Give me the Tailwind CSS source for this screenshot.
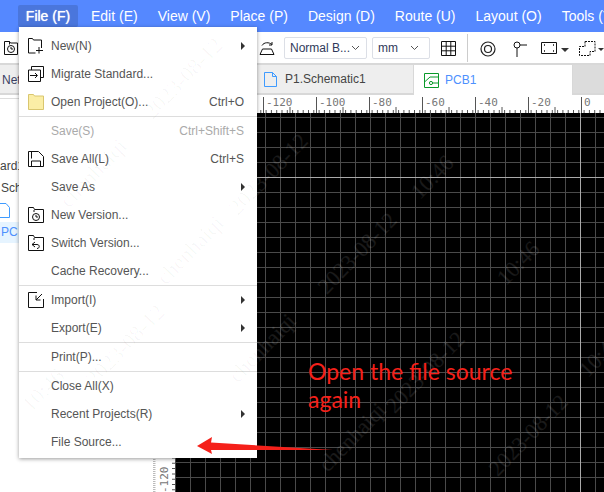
<!DOCTYPE html>
<html lang="en">
<head>
  <meta charset="UTF-8">
  <title>File menu</title>
  <script src="https://cdn.jsdelivr.net/npm/@tailwindcss/browser@4"></script>
</head>
<body class="w-[604px] h-[492px] overflow-hidden bg-white font-['Liberation_Sans',Arial,sans-serif] text-[12px] text-[#555]">
  <div class="relative w-[604px] h-[492px] overflow-hidden flex flex-col">
    <!-- menu bar -->
    <div class="h-[32px] shrink-0 bg-[#5588ff] text-white text-[14px] flex items-center pl-[18px] whitespace-nowrap overflow-hidden">
      <div class="h-[22px] w-[60px] shrink-0 flex items-center justify-center rounded-[2px] bg-[#4a76dc] [text-shadow:0_0_1px_#fff]">File (F)</div>
      <div class="ml-[13px] shrink-0">Edit (E)</div>
      <div class="ml-[20px] shrink-0">View (V)</div>
      <div class="ml-[20px] shrink-0">Place (P)</div>
      <div class="ml-[20px] shrink-0">Design (D)</div>
      <div class="ml-[20px] shrink-0">Route (U)</div>
      <div class="ml-[20px] shrink-0">Layout (O)</div>
      <div class="ml-[20px] shrink-0">Tools (T)</div>
    </div>

    <!-- toolbar -->
    <div class="h-[33px] shrink-0 border-b-2 border-[#d8d8d8] flex items-center relative">
      <svg class="absolute left-[3px] top-[8px]" width="16" height="16" viewBox="0 0 16 16" fill="none" stroke="#111"><path d="M1.500 14.500v-13h5l1 1.500h7v11.500zM6.500 1.500v3"/><circle cx="8" cy="9" r="3.500"/><path d="M8 7v2h2"/></svg>
      <svg class="absolute left-[259px] top-[9px]" width="16" height="15" viewBox="0 0 16 15" fill="none" stroke="#111"><path d="M1 13.500h14l-2.500-5.500h-9zM3 4.500C5 1 10 1 13 3.500M13 1v3h-3"/></svg>
      <div class="absolute left-[284px] top-[5px] w-[83px] h-[22px] border border-[#dcdfe6] rounded-[2px] flex items-center pl-[5px] text-[#303a5a] whitespace-nowrap">Normal B...<svg class="ml-[1px]" width="9" height="6" viewBox="0 0 9 6" fill="none" stroke="#555"><path d="M1 1l3.500 3.500L8 1"/></svg></div>
      <div class="absolute left-[372px] top-[5px] w-[58px] h-[22px] border border-[#dcdfe6] rounded-[2px] flex items-center justify-between px-[5px] text-[#303a5a]">mm<svg class="mr-[5px]" width="9" height="6" viewBox="0 0 9 6" fill="none" stroke="#555"><path d="M1 1l3.500 3.500L8 1"/></svg></div>
      <svg class="absolute left-[441px] top-[9px]" width="15" height="15" viewBox="0 0 15 15" fill="none" stroke="#111"><path d="M.5.500h14v14H.5zM5.200.500v14M9.800.500v14M.5 5.200h14M.5 9.800h14"/></svg>
      <div class="absolute left-[467px] top-[2px] w-px h-[28px] bg-[#ccc]"></div>
      <svg class="absolute left-[480px] top-[9px]" width="16" height="16" viewBox="0 0 16 16" fill="none" stroke="#222" stroke-width="1.200"><circle cx="8" cy="8" r="7"/><circle cx="8" cy="8" r="3.500"/></svg>
      <svg class="absolute left-[512px] top-[9px]" width="16" height="16" viewBox="0 0 16 16" fill="none" stroke="#111"><circle cx="5" cy="4" r="3"/><path d="M5 7v9M8 4h7"/></svg>
      <svg class="absolute left-[541px] top-[10px]" width="28" height="14" viewBox="0 0 28 14" fill="none" stroke="#111"><path d="M.5 .5h15v11H.5z"/><path d="M3 3h1M12 3h1M3 9h1M12 9h1" stroke-width="1.500"/><path d="M20 6h8l-4 4z" fill="#333" stroke="none"/></svg>
      <svg class="absolute left-[579px] top-[9px]" width="25" height="16" viewBox="0 0 25 16" fill="none" stroke="#111" stroke-dasharray="2 1"><path d="M6 .5h10v10h-5v4H.5v-9H6z"/><path d="M19 7h6v0l-3 3z" fill="#333" stroke="none"/></svg>
    </div>

    <!-- tabs -->
    <div class="h-[30px] shrink-0 bg-[#dcdcdc] border-b-2 border-[#d8d8d8] flex text-[13px]">
      <div class="w-[27px] h-full bg-[#eee] border-r border-[#d8d8d8] pl-[2px] pt-[6px] overflow-hidden text-[#3a3f63] text-[12px]">Net</div>
      <div class="w-[222px] bg-[#eee]"></div>
      <div class="w-[165px] h-full bg-[#eeeeee] border-x border-[#d8d8d8] flex items-center pl-[14px] text-[#444]">
        <svg width="13" height="15" viewBox="0 0 13 15" fill="none" stroke="#3f9bff"><path d="M.5.500h8l4 4v10H.5zM8.500.500v4h4"/></svg>
        <span class="ml-[8px] text-[12px]">P1.Schematic1</span>
      </div>
      <div class="w-[159px] h-[30px] bg-white border-r border-[#d8d8d8] flex items-center pl-[10px] text-[#4d90fe]">
        <svg width="15" height="15" viewBox="0 0 15 15" fill="none" stroke="#0a9a2a"><path d="M.5.500h14v14H.5z"/><path d="M.5 9L6 4h8.500M8 10h6.500"/><circle cx="7" cy="10" r="1.600"/></svg>
        <span class="ml-[6px] text-[12px]">PCB1</span>
      </div>
    </div>

    <!-- workspace -->
    <div class="flex-1 flex min-h-0">
      <!-- project panel -->
      <div class="w-[153px] shrink-0 relative text-[#444] text-[12px]">
        <div class="mt-[3px] border-t border-[#ddd]"></div>
        <div class="absolute left-0 top-[62px] whitespace-nowrap">ard1</div>
        <div class="absolute left-[1px] top-[84px]">Sch</div>
        <svg class="absolute left-0 top-[108px]" width="10" height="15" viewBox="0 0 10 15" fill="none" stroke="#3f9bff"><path d="M-1 .5h7l3.500 4v10H-1z"/></svg>
        <div class="absolute left-0 top-[127px] w-[19px] h-[21px] pl-px bg-[#e6f4ff] text-[#4d90fe] leading-[21px]">PC</div>
      </div>
      <!-- rulers and canvas -->
      <div class="flex-1 min-w-0 relative">
        <div class="h-[18px] bg-white relative overflow-hidden">
          <svg width="451" height="18" viewBox="0 0 451 18" class="absolute left-0 top-0" font-family="'DejaVu Sans Mono',monospace" font-size="11" fill="#777">
            <path stroke="#555" d="M110.500 2v16M163.500 2v16M216.500 2v16M269.500 2v16M322.500 2v16M375.500 2v16M428.500 2v16M137 12v6M190 12v6M243 12v6M296 12v6M349 12v6M402 12v6" fill="none"/>
            <path stroke="#555" stroke-dasharray="1 4.300" d="M22.500 16.500h430" fill="none" stroke-width="3"/>
            <text x="113" y="11">-120</text><text x="166" y="11">-100</text><text x="219" y="11">-80</text><text x="272" y="11">-60</text><text x="325" y="11">-40</text><text x="378" y="11">-20</text><text x="431" y="11">0</text>
          </svg>
        </div>
        <div class="absolute left-0 top-[18px] bottom-0 w-[22px] bg-white overflow-hidden">
          <svg width="22" height="379" viewBox="0 0 22 379" font-family="'DejaVu Sans Mono',monospace" font-size="11" fill="#777">
            <path stroke="#bbb" stroke-dasharray="1 1" d="M1 0v379" stroke-width="3" fill="none"/>
            <path stroke="#555" stroke-dasharray="1 4.300" d="M20.500 0v379" stroke-width="3" fill="none"/>
            <path stroke="#555" d="M14 329.500h8" fill="none"/>
            <text transform="translate(15 380) rotate(-90)">-120</text>
          </svg>
        </div>
        <svg class="absolute left-[22px] top-[18px]" width="429" height="379" viewBox="0 0 429 379">
          <defs>
            <pattern id="grid" width="15" height="15" patternUnits="userSpaceOnUse" x="0" y="4">
              <path d="M.5 0V15M0 .5H15" fill="none" stroke="#4a4a4a" stroke-width="1"/>
            </pattern>
          </defs>
          <rect width="429" height="379" fill="#000"/>
          <rect width="429" height="379" fill="url(#grid)"/>
          <path d="M0 64.500h429M405.500 0v379" stroke="#aaa" fill="none"/>
        </svg>
      </div>
    </div>

    <!-- watermark on the canvas -->
    <div class="absolute inset-0 pointer-events-none font-['Liberation_Serif',serif] text-[22px] text-white/10 whitespace-nowrap">
      <div class="absolute left-[268px] top-[174px] -translate-x-1/2 -translate-y-1/2 -rotate-[46deg]">2023-08-12</div>
      <div class="absolute left-[357px] top-[253px] -translate-x-1/2 -translate-y-1/2 -rotate-[46deg]">2023-08-12</div>
      <div class="absolute left-[432px] top-[177px] -translate-x-1/2 -translate-y-1/2 -rotate-[46deg]">10:46</div>
      <div class="absolute left-[518px] top-[263px] -translate-x-1/2 -translate-y-1/2 -rotate-[46deg]">10:46</div>
      <div class="absolute left-[600px] top-[355px] -translate-x-1/2 -translate-y-1/2 -rotate-[46deg]">10:46</div>
      <div class="absolute left-[528px] top-[435px] -translate-x-1/2 -translate-y-1/2 -rotate-[46deg]">2023-08-12</div>
      <div class="absolute left-[425px] top-[372px] -translate-x-1/2 -translate-y-1/2 -rotate-[46deg]">2023-08-12</div>
      <div class="absolute left-[352px] top-[437px] -translate-x-1/2 -translate-y-1/2 -rotate-[46deg]">chenhaiqi</div>
      <div class="absolute left-[262px] top-[348px] -translate-x-1/2 -translate-y-1/2 -rotate-[46deg]">chenhaiqi</div>
    </div>

    <!-- file menu -->
    <div class="absolute left-[19px] top-[27px] w-[238px] h-[431px] bg-white shadow-[0_1px_4px_rgba(0,0,0,0.4)] text-[12px] text-[#555] pt-[5px]">
      <div class="absolute inset-0 overflow-hidden pointer-events-none font-['Liberation_Serif',serif] text-[22px] text-black/[0.03] whitespace-nowrap">
        <div class="absolute left-[164px] top-[51px] -translate-x-1/2 -translate-y-1/2 -rotate-[46deg]">2023-08-12</div>
        <div class="absolute left-[74px] top-[146px] -translate-x-1/2 -translate-y-1/2 -rotate-[46deg]">chenhaiqi</div>
        <div class="absolute left-[249px] top-[147px] -translate-x-1/2 -translate-y-1/2 -rotate-[46deg]">2023-08-12</div>
        <div class="absolute left-[171px] top-[223px] -translate-x-1/2 -translate-y-1/2 -rotate-[46deg]">chenhaiqi</div>
        <div class="absolute left-[106px] top-[318px] -translate-x-1/2 -translate-y-1/2 -rotate-[46deg]">2023-08-12</div>
        <div class="absolute left-[24px] top-[363px] -translate-x-1/2 -translate-y-1/2 -rotate-[46deg]">10:46</div>
        <div class="absolute left-[243px] top-[321px] -translate-x-1/2 -translate-y-1/2 -rotate-[46deg]">chenhaiqi</div>
      </div>
      <div class="h-[28px] flex items-center justify-between relative pl-[32px] pr-[12px]">
        <svg class="absolute left-[9px] top-[6px]" width="16" height="16" viewBox="0 0 16 16" fill="none" stroke="#111"><path d="M.5 15V.500h4l1 1.500h8v8M.5 15h7M11 9v6.500M8 12.500h7"/></svg>
        <span>New(N)</span><span class="w-0 h-0 border-y-[4px] border-y-transparent border-l-[4px] border-l-[#333]"></span>
      </div>
      <div class="h-[28px] flex items-center relative pl-[32px]">
        <svg class="absolute left-[9px] top-[6px]" width="16" height="16" viewBox="0 0 16 16" fill="none" stroke="#111"><path d="M3.500 4V.500h12v11h-3M.5 4h12v11.500H.5zM2 9.500h7M7 7l2.500 2.500L7 12"/></svg>
        <span>Migrate Standard...</span>
      </div>
      <div class="h-[28px] flex items-center justify-between relative pl-[32px] pr-[13px]">
        <svg class="absolute left-[9px] top-[6px]" width="16" height="16" viewBox="0 0 16 16" fill="#fbeea6" stroke="#d9c66f"><path d="M.5 15.500V.500h5l1 1.500h9v13.500z"/></svg>
        <span>Open Project(O)...</span><span>Ctrl+O</span>
      </div>
      <div class="h-px bg-[#ddd]"></div>
      <div class="h-[28px] flex items-center justify-between pl-[32px] pr-[13px] text-[#aaa]">
        <span>Save(S)</span><span>Ctrl+Shift+S</span>
      </div>
      <div class="h-[28px] flex items-center justify-between relative pl-[32px] pr-[13px]">
        <svg class="absolute left-[9px] top-[6px]" width="16" height="16" viewBox="0 0 16 16" fill="none" stroke="#111"><path d="M.5.500h10l5 5v10H.5zM3.500.500v7M3.500 15v-5h9v5"/></svg>
        <span>Save All(L)</span><span>Ctrl+S</span>
      </div>
      <div class="h-[28px] flex items-center justify-between pl-[32px] pr-[12px]">
        <span>Save As</span><span class="w-0 h-0 border-y-[4px] border-y-transparent border-l-[4px] border-l-[#333]"></span>
      </div>
      <div class="h-[28px] flex items-center relative pl-[32px]">
        <svg class="absolute left-[9px] top-[6px]" width="16" height="16" viewBox="0 0 16 16" fill="none" stroke="#111"><path d="M.5 15.500V.500h5l1 2h9v13zM6 3v2"/><circle cx="8" cy="10" r="3.500"/><path d="M8 8v2h2"/></svg>
        <span>New Version...</span>
      </div>
      <div class="h-[28px] flex items-center relative pl-[32px]">
        <svg class="absolute left-[9px] top-[6px]" width="16" height="16" viewBox="0 0 16 16" fill="none" stroke="#111"><path d="M.5 15.500V.500h5l1 2h9v13zM6 3v2"/><path d="M7 7l-3 2.500L7 12M4 9.500h5c3 0 3 4 0 4"/></svg>
        <span>Switch Version...</span>
      </div>
      <div class="h-[28px] flex items-center pl-[32px]">Cache Recovery...</div>
      <div class="h-px bg-[#ddd]"></div>
      <div class="h-[28px] flex items-center justify-between relative pl-[32px] pr-[12px]">
        <svg class="absolute left-[9px] top-[6px]" width="16" height="16" viewBox="0 0 16 16" fill="none" stroke="#111"><path d="M9 .5H.5v15h15V7M14 2L8 8M8 3.500V8h4.500"/></svg>
        <span>Import(I)</span><span class="w-0 h-0 border-y-[4px] border-y-transparent border-l-[4px] border-l-[#333]"></span>
      </div>
      <div class="h-[28px] flex items-center justify-between pl-[32px] pr-[12px]">
        <span>Export(E)</span><span class="w-0 h-0 border-y-[4px] border-y-transparent border-l-[4px] border-l-[#333]"></span>
      </div>
      <div class="h-px bg-[#ddd]"></div>
      <div class="h-[28px] flex items-center pl-[32px]">Print(P)...</div>
      <div class="h-px bg-[#ddd]"></div>
      <div class="h-[28px] flex items-center pl-[32px]">Close All(X)</div>
      <div class="h-[28px] flex items-center justify-between pl-[32px] pr-[12px]">
        <span>Recent Projects(R)</span><span class="w-0 h-0 border-y-[4px] border-y-transparent border-l-[4px] border-l-[#333]"></span>
      </div>
      <div class="h-[28px] flex items-center pl-[32px]">File Source...</div>
    </div>

    <!-- annotation -->
    <div class="absolute left-[308px] top-[357px] w-[220px] text-[23px] leading-[28px] text-[#f5201a] font-['Lato',sans-serif]">Open the file source again</div>
    <svg class="absolute left-[195px] top-[430px]" width="145" height="28" viewBox="0 0 145 28"><path d="M2 16L17 7 16 12.500 138 20 16 20 17 24z" fill="#f5201a"/></svg>
  </div>
</body>
</html>
